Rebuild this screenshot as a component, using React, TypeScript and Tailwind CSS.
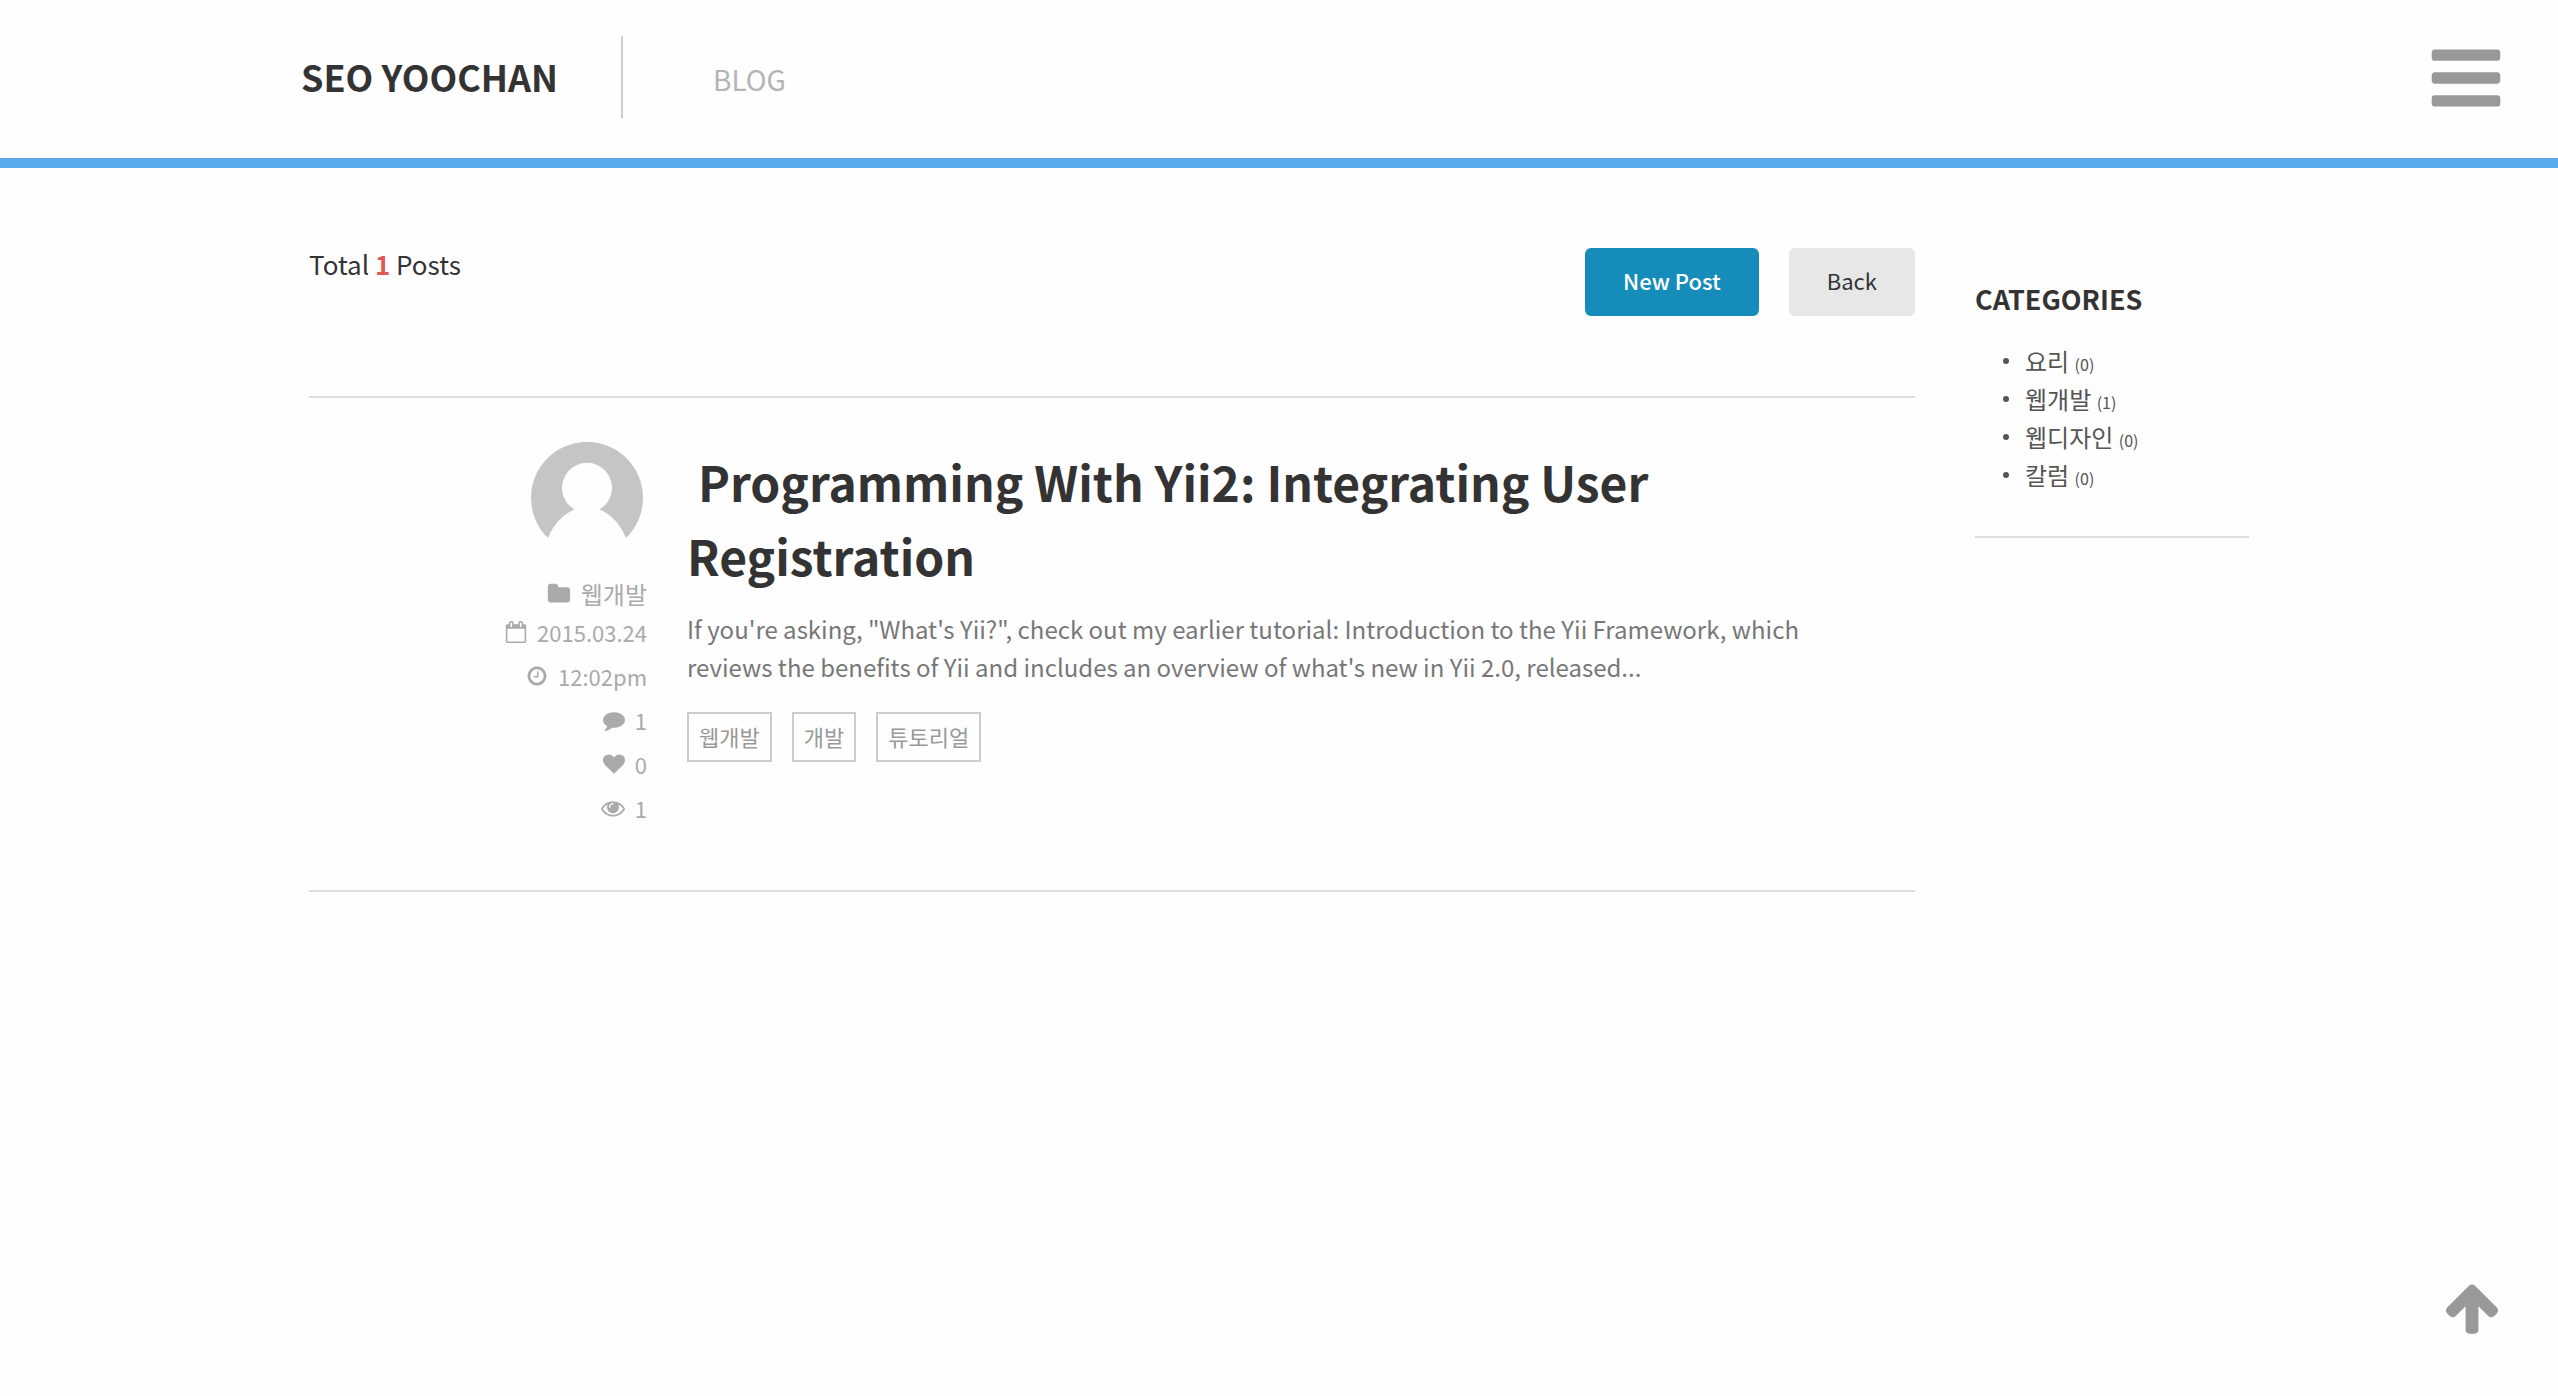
import type { ReactNode } from "react";

const icons = {
  bars: "M1664 1344v128q0 26-19 45t-45 19h-1408q-26 0-45-19t-19-45v-128q0-26 19-45t45-19h1408q26 0 45 19t19 45zm0-512v128q0 26-19 45t-45 19h-1408q-26 0-45-19t-19-45v-128q0-26 19-45t45-19h1408q26 0 45 19t19 45zm0-512v128q0 26-19 45t-45 19h-1408q-26 0-45-19t-19-45v-128q0-26 19-45t45-19h1408q26 0 45 19t19 45z",
  arrowUp:
    "M1675 971q0 51-37 90l-75 75q-38 38-91 38-54 0-90-38l-294-293v704q0 52-37.5 84.5t-90.5 32.5h-128q-53 0-90.5-32.5t-37.5-84.5v-704l-294 293q-36 38-90 38t-90-38l-75-75q-38-38-38-90 0-53 38-91l651-651q35-37 90-37 54 0 91 37l651 651q37 39 37 91z",
  folder:
    "M1728 608v704q0 92-66 158t-158 66h-1216q-92 0-158-66t-66-158v-960q0-92 66-158t158-66h320q92 0 158 66t66 158v32h672q92 0 158 66t66 158z",
  calendar:
    "M192 1664h1408v-1024h-1408v1024zm384-1216v-288q0-14-9-23t-23-9h-64q-14 0-23 9t-9 23v288q0 14 9 23t23 9h64q14 0 23-9t9-23zm768 0v-288q0-14-9-23t-23-9h-64q-14 0-23 9t-9 23v288q0 14 9 23t23 9h64q14 0 23-9t9-23zm384-64v1280q0 52-38 90t-90 38h-1408q-52 0-90-38t-38-90v-1280q0-52 38-90t90-38h128v-96q0-66 47-113t113-47h64q66 0 113 47t47 113v96h384v-96q0-66 47-113t113-47h64q66 0 113 47t47 113v96h128q52 0 90 38t38 90z",
  clock:
    "M1024 544v448q0 14-9 23t-23 9h-320q-14 0-23-9t-9-23v-64q0-14 9-23t23-9h224v-352q0-14 9-23t23-9h64q14 0 23 9t9 23zm416 352q0-148-73-273t-198-198-273-73-273 73-198 198-73 273 73 273 198 198 273 73 273-73 198-198 73-273zm224 0q0 209-103 385.5t-279.5 279.5-385.5 103-385.5-103-279.5-279.5-103-385.5 103-385.5 279.5-279.5 385.5-103 385.5 103 279.5 279.5 103 385.5z",
  comment:
    "M1792 896q0 174-120 321.5t-326 233-450 85.5q-70 0-145-8-198 175-460 242-49 14-114 22-17 2-30.5-9t-17.5-29v-1q-3-4-.5-12t2-10 4.5-9.5l6-9 7-8.5 8-9q7-8 31-34.5t34.5-38 31-39.5 32.5-51 27-59 26-76q-157-89-247.5-220t-90.5-281q0-130 71-248.5t191-204.5 286-136.5 348-50.5q244 0 450 85.5t326 233 120 321.5z",
  heart:
    "M896 1664q-26 0-44-18l-624-602q-10-8-27.5-26t-55.5-65.5-68-97.5-53.5-121-23.5-138q0-220 127-344t351-124q62 0 126.5 21.5t120 58 95.5 68.5 76 68q36-36 76-68t95.5-68.5 120-58 126.5-21.5q224 0 351 124t127 344q0 221-229 450l-623 600q-18 18-44 18z",
  eye: "M1664 960q-152-236-381-353 61 104 61 225 0 185-131.5 316.5t-316.5 131.5-316.5-131.5-131.5-316.5q0-121 61-225-229 117-381 353 133 205 333.5 326.5t434.5 121.5 434.5-121.5 333.5-326.5zm-720-384q0-20-14-34t-34-14q-125 0-214.5 89.5t-89.5 214.5q0 20 14 34t34 14 34-14 14-34q0-86 61-147t147-61q20 0 34-14t14-34zm848 384q0 34-20 69-140 230-376.5 368.5t-499.5 138.5-499.5-139-376.5-368q-20-35-20-69t20-69q140-229 376.5-368t499.5-139 499.5 139 376.5 368q20 35 20 69z",
};

type IconName = keyof typeof icons;

function Icon({ name, className }: { name: IconName; className: string }) {
  return (
    <svg viewBox="0 0 1792 1792" fill="currentColor" aria-hidden="true" className={`shrink-0 ${className}`}>
      <path d={icons[name]} />
    </svg>
  );
}

function Avatar() {
  return (
    <svg viewBox="0 0 112 112" role="img" aria-label="Author" className="mr-1 size-28">
      <path
        fill="#c5c5c5"
        d="M17 96A56 56 0 1 1 95 96C90 83 80 72 68.500 67.500A25 25 0 1 0 43.500 67.500C32 72 22 83 17 96Z"
      />
    </svg>
  );
}

function MetaRow({ icon, size = "size-[22px]", children }: { icon: IconName; size?: string; children: ReactNode }) {
  return (
    <li className="flex h-11 items-center gap-2.5 text-[22px] leading-[44px]">
      <Icon name={icon} className={size} />
      {children}
    </li>
  );
}

const categories = [
  { name: "요리", count: 0 },
  { name: "웹개발", count: 1 },
  { name: "웹디자인", count: 0 },
  { name: "칼럼", count: 0 },
];

const tags = ["웹개발", "개발", "튜토리얼"];

export default function App() {
  return (
    <div className="min-h-screen bg-[#fefefe] font-['Noto_Sans_CJK_KR',sans-serif] text-[#333]">
      <header className="grid grid-cols-[1fr_minmax(0,1956px)_1fr] items-center border-b-[10px] border-[#5aabec] pt-9 pb-10">
        <div className="col-start-2 flex items-center">
          <a href="#" className="w-80 pb-0.5 text-[36px] leading-[80px] font-bold whitespace-nowrap">
            SEO YOOCHAN
          </a>
          <nav className="flex h-[82px] items-center border-l-2 border-[#ccc] pl-[90px]">
            <a href="#" className="pt-1 text-[28px] leading-10 text-[#b4b4b4]">
              BLOG
            </a>
          </nav>
        </div>
        <button type="button" aria-label="Menu" className="mr-[52px] self-end justify-self-end text-[#999]">
          <Icon name="bars" className="size-20" />
        </button>
      </header>

      <div className="mx-auto flex max-w-[1940px] items-start gap-[60px] pt-20">
        <main className="min-w-0 flex-1">
          <div className="mb-20 flex items-start justify-between">
            <p className="text-[26px] leading-8">
              Total <strong className="font-bold text-[#e05757]">1</strong> Posts
            </p>
            <div className="flex gap-[30px] text-[22px] leading-[64px]">
              <button type="button" className="rounded-md bg-[#158cba] px-[38px] pb-1 font-medium text-white">
                New Post
              </button>
              <button type="button" className="rounded-md bg-[#e7e7e7] px-[38px] pb-1">
                Back
              </button>
            </div>
          </div>

          <article className="flex gap-10 border-y-2 border-[#ddd] pt-11 pb-[60px]">
            <div className="flex w-[338px] shrink-0 flex-col items-end text-[#aaa]">
              <Avatar />
              <ul className="mt-6 flex flex-col items-end">
                <li className="flex items-center gap-2.5 text-2xl leading-8">
                  <Icon name="folder" className="size-6" />
                  <a href="#">웹개발</a>
                </li>
                <MetaRow icon="calendar">2015.03.24</MetaRow>
                <MetaRow icon="clock">12:02pm</MetaRow>
                <MetaRow icon="comment">1</MetaRow>
                <MetaRow icon="heart">0</MetaRow>
                <MetaRow icon="eye" size="size-6">
                  1
                </MetaRow>
              </ul>
            </div>
            <div className="min-w-0 flex-1 pt-0.5 pr-[76px]">
              <h2 className="text-[48px] leading-[74px] font-bold">
                <a href="#">&nbsp;Programming With Yii2: Integrating User Registration</a>
              </h2>
              <p className="mt-[18px] text-2xl leading-[38px] text-[#777]">
                If you're asking, "What's Yii?", check out my earlier tutorial: Introduction to the Yii Framework, which
                reviews the benefits of Yii and includes an overview of what's new in Yii 2.0, released...
              </p>
              <ul className="mt-[26px] flex gap-5 text-[22px] leading-[44px] text-[#999]">
                {tags.map((tag) => (
                  <li key={tag}>
                    <a href="#" className="block border-2 border-[#ccc] px-2.5 pb-0.5">
                      {tag}
                    </a>
                  </li>
                ))}
              </ul>
            </div>
          </article>
        </main>

        <aside className="mt-8 w-[274px] shrink-0 border-b-2 border-[#ddd] pb-[42px]">
          <h3 className="text-[27px] leading-[38px] font-bold">CATEGORIES</h3>
          <ul className="mt-6 pl-7 text-2xl leading-[38px] text-[#555]">
            {categories.map(({ name, count }) => (
              <li key={name} className="flex h-[38px] items-center gap-4">
                <span className="size-1.5 rounded-full bg-[#555]" />
                <a href="#">
                  {name} <small className="text-[16px] leading-none">({count})</small>
                </a>
              </li>
            ))}
          </ul>
        </aside>
      </div>

      <a href="#" aria-label="Back to top" className="fixed right-14 bottom-[58px] text-[#999]">
        <Icon name="arrowUp" className="size-[60px]" />
      </a>
    </div>
  );
}
